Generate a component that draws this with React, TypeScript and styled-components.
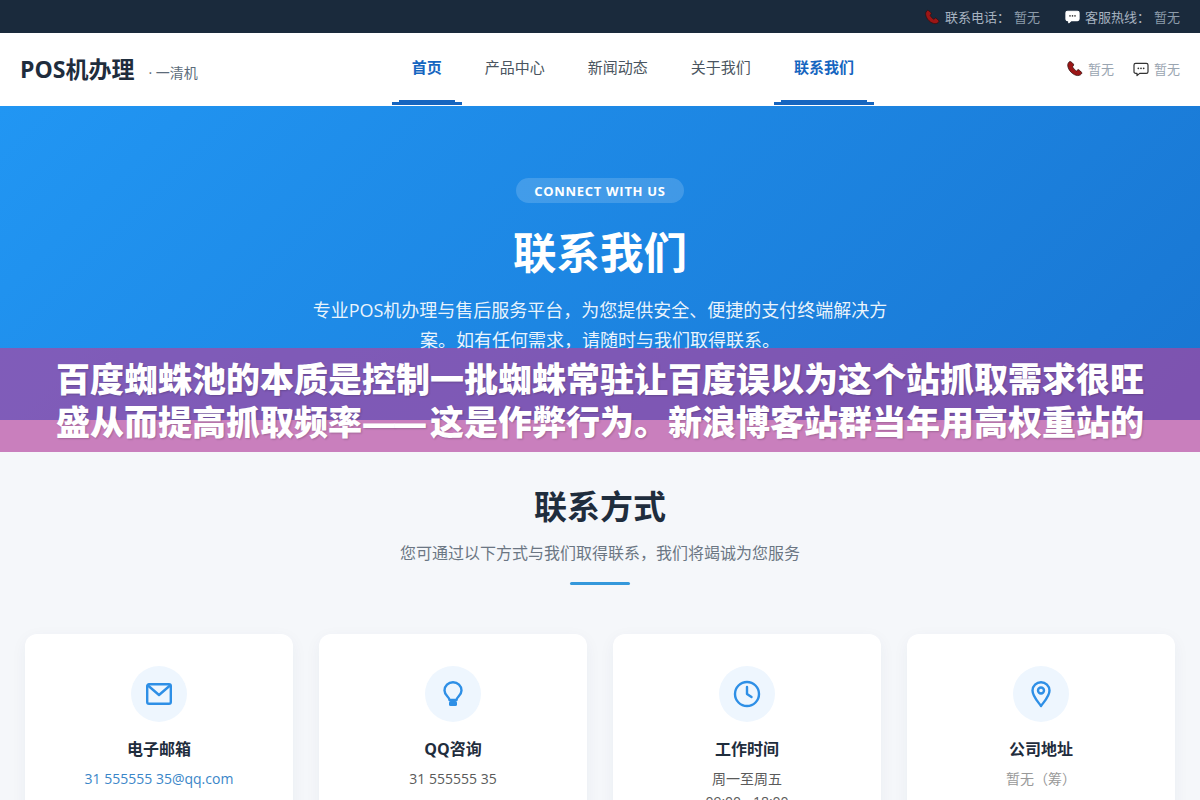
import React from 'react'
import styled, { createGlobalStyle } from 'styled-components'

const GlobalStyle = createGlobalStyle`
  html, body {
    margin: 0;
    padding: 0;
    height: 800px;
    overflow: hidden;
    background: #f5f7fa;
    font-family: "Open Sans", "Noto Sans CJK SC", sans-serif;
  }
  * { box-sizing: border-box; }
`

const Page = styled.div`
  position: relative;
  width: 1200px;
  height: 800px;
  overflow: hidden;
`

const TopBar = styled.div`
  height: 33px;
  background: #1a2a3c;
  display: flex;
  justify-content: flex-end;
  align-items: center;
  gap: 25px;
  padding: 0 20px;
  font-size: 13px;
  color: #a7b3c0;
`

const TopItem = styled.div`
  display: flex;
  align-items: center;
  gap: 5px;
`

const TopLabel = styled.span`
  display: flex;
  gap: 4px;
`

const Muted = styled.span`
  color: #8d9cab;
`

const Header = styled.header`
  height: 73px;
  background: #fff;
  display: flex;
  justify-content: space-between;
  align-items: center;
  padding: 0 20px;
`

const Logo = styled.div`
  display: flex;
  align-items: baseline;
  gap: 14px;
  margin-bottom: 4px;
`

const LogoName = styled.span`
  font-size: 23px;
  font-weight: 700;
  color: #1f2d3d;
`

const LogoTag = styled.span`
  font-size: 14px;
  color: #5c6b7a;
`

const Nav = styled.nav`
  display: flex;
  gap: 3px;
  height: 100%;
  margin-left: 2px;
`

const NavItem = styled.a<{ $active?: boolean }>`
  position: relative;
  padding: 0 20px 7px;
  display: flex;
  align-items: center;
  font-size: 15px;
  font-weight: ${(p) => (p.$active ? 700 : 400)};
  color: ${(p) => (p.$active ? '#1565c0' : '#4a5560')};

  &::before {
    content: ${(p) => (p.$active ? "''" : 'none')};
    position: absolute;
    left: 7px;
    right: 7px;
    bottom: 4px;
    height: 2px;
    background: #1565c0;
  }

  &::after {
    content: ${(p) => (p.$active ? "''" : 'none')};
    position: absolute;
    left: 0;
    right: 0;
    bottom: 1px;
    height: 3px;
    background: #1565c0;
  }
`

const HeaderContacts = styled.div`
  display: flex;
  gap: 19px;
  margin-bottom: 2px;
  font-size: 13px;
  color: #9aa5b1;
`

const HeaderContact = styled.div`
  display: flex;
  align-items: center;
  gap: 5px;
`

const Hero = styled.section`
  height: 314px;
  background: linear-gradient(135deg, #2196f3 0%, #1976d2 100%);
  display: flex;
  flex-direction: column;
  align-items: center;
  padding-top: 72px;
  color: #fff;
`

const Pill = styled.div`
  height: 25px;
  width: 168px;
  border-radius: 13px;
  background: rgba(255, 255, 255, 0.16);
  font-size: 13px;
  font-weight: 700;
  letter-spacing: 0.7px;
  display: flex;
  align-items: center;
  justify-content: center;
`

const HeroTitle = styled.h1`
  margin: 20px 0 0;
  font-size: 43.500px;
  line-height: 60px;
  font-weight: 700;
`

const HeroText = styled.p`
  margin: 12px 0 0;
  width: 600px;
  font-size: 18px;
  line-height: 30px;
  text-align: center;
  color: rgba(255, 255, 255, 0.92);
`

const Section = styled.section`
  padding: 60px 25px 0;
  display: flex;
  flex-direction: column;
  align-items: center;
`

const SectionTitle = styled.h2`
  margin: 0;
  font-size: 33px;
  line-height: 54px;
  font-weight: 700;
  color: #1f2d3d;
`

const SectionText = styled.p`
  margin: 6px 0 0;
  font-size: 16px;
  line-height: 26px;
  color: #6b7683;
`

const Rule = styled.div`
  margin-top: 16px;
  width: 60px;
  height: 3px;
  border-radius: 2px;
  background: #3498db;
`

const CardGrid = styled.div`
  margin-top: 49px;
  width: 100%;
  display: grid;
  grid-template-columns: repeat(4, 1fr);
  gap: 26px;
`

const Card = styled.article`
  height: 260px;
  padding-top: 32px;
  background: #fff;
  border-radius: 12px;
  box-shadow: 0 4px 16px rgba(40, 60, 90, 0.05);
  display: flex;
  flex-direction: column;
  align-items: center;
`

const IconCircle = styled.div`
  width: 56px;
  height: 56px;
  border-radius: 50%;
  background: #eef6fe;
  display: flex;
  align-items: center;
  justify-content: center;
`

const CardTitle = styled.h3`
  margin: 16px 0 0;
  font-size: 16px;
  line-height: 22px;
  font-weight: 700;
  color: #1f2d3d;
`

const CardLine = styled.div<{ $tone?: 'link' | 'muted' }>`
  margin-top: 8px;
  font-size: 14px;
  line-height: 22px;
  color: ${(p) => (p.$tone === 'link' ? '#3a86c8' : p.$tone === 'muted' ? '#999' : '#5a5a5a')};

  & + & {
    margin-top: 1px;
  }
`

const Banner = styled.div`
  position: absolute;
  left: 0;
  right: 0;
  top: 348px;
  height: 104px;
  padding-top: 10px;
  background: rgba(177, 65, 158, 0.66);
  color: #fff;
  text-align: center;
  font-size: 34px;
  line-height: 43px;
  font-weight: 900;
  white-space: nowrap;
  text-shadow: 1px 1px 2px rgba(0, 0, 0, 0.2);
`

const Dash = styled.span`
  letter-spacing: -3px;
  margin-right: 6px;
`

const PhoneIcon: React.FC<{ size: number }> = ({ size }) => (
  <svg width={size} height={size} viewBox="0 0 24 24">
    <path
      d="M5.500 2C3.500 3 2 5.500 2.500 8.500C3.500 15 10 21.500 16.500 22C19.500 22 21.500 20.500 22.500 18.500C22.500 17.500 18.500 13.500 17 13.500L14.800 15.500C12.500 14.300 10 11.500 9.300 9.500L11 7C11 5.500 7 2 5.500 2Z"
      fill="#9c1616"
      stroke="#2a0c0c"
      strokeWidth="1"
      strokeLinejoin="round"
    />
  </svg>
)

const BubbleIcon: React.FC<{ size: number; outline?: boolean }> = ({ size, outline }) => (
  <svg width={size} height={size} viewBox="0 0 24 24">
    <path
      d="M4 3.500H20C21.500 3.500 22.500 4.500 22.500 6V16C22.500 17.500 21.500 18.500 20 18.500H10L6 22V18.500H4C2.500 18.500 1.500 17.500 1.500 16V6C1.500 4.500 2.500 3.500 4 3.500Z"
      fill="#fff"
      stroke={outline ? '#333' : '#fff'}
      strokeWidth="1.800"
      strokeLinejoin="round"
    />
    <circle cx="8" cy="11" r="1.300" fill="#333" />
    <circle cx="12" cy="11" r="1.300" fill="#333" />
    <circle cx="16" cy="11" r="1.300" fill="#333" />
  </svg>
)

const CardSvg: React.FC<{ children: React.ReactNode }> = ({ children }) => (
  <svg width="28" height="28" viewBox="0 0 28 28" fill="none" stroke="#2e8fe6" strokeWidth="2.400" strokeLinecap="round" strokeLinejoin="round">
    {children}
  </svg>
)

const cards = [
  {
    title: '电子邮箱',
    lines: [{ text: '31 555555 35@qq.com', tone: 'link' as const }],
    icon: (
      <>
        <rect x="2.200" y="4.200" width="23.600" height="19.600" rx="1.800" />
        <path d="M3 5.500L14 15L25 5.500" />
      </>
    ),
  },
  {
    title: 'QQ咨询',
    lines: [{ text: '31 555555 35' }],
    icon: (
      <>
        <path d="M10.500 20C10.500 17 5.500 15.500 5.500 10.500C5.500 5.800 9.300 2.200 14 2.200C18.700 2.200 22.500 5.800 22.500 10.500C22.500 15.500 17.500 17 17.500 20Z" />
        <rect x="10" y="21" width="8" height="5" rx="1.500" fill="#2e8fe6" stroke="none" />
      </>
    ),
  },
  {
    title: '工作时间',
    lines: [{ text: '周一至周五' }, { text: '09:00 - 18:00' }],
    icon: (
      <>
        <circle cx="14" cy="14" r="12" />
        <path d="M14 7V14L18.500 17" />
      </>
    ),
  },
  {
    title: '公司地址',
    lines: [{ text: '暂无（筹）', tone: 'muted' as const }],
    icon: (
      <>
        <path d="M14 26C10 20.500 5.500 16 5.500 10.500C5.500 5.800 9.500 2.200 14 2.200C18.500 2.200 22.500 5.800 22.500 10.500C22.500 16 18 20.500 14 26Z" />
        <circle cx="14" cy="10.500" r="3" />
      </>
    ),
  },
]

const navLinks = [
  { title: '首页', active: true },
  { title: '产品中心' },
  { title: '新闻动态' },
  { title: '关于我们' },
  { title: '联系我们', active: true },
]

const App: React.FC = () => (
  <Page>
    <GlobalStyle />
    <TopBar>
      <TopItem>
        <PhoneIcon size={16} />
        <TopLabel>
          联系电话：<Muted>暂无</Muted>
        </TopLabel>
      </TopItem>
      <TopItem>
        <BubbleIcon size={15} />
        <TopLabel>
          客服热线：<Muted>暂无</Muted>
        </TopLabel>
      </TopItem>
    </TopBar>
    <Header>
      <Logo>
        <LogoName>POS机办理</LogoName>
        <LogoTag>· 一清机</LogoTag>
      </Logo>
      <Nav>
        {navLinks.map((link) => (
          <NavItem key={link.title} $active={link.active}>
            {link.title}
          </NavItem>
        ))}
      </Nav>
      <HeaderContacts>
        <HeaderContact>
          <PhoneIcon size={17} />
          暂无
        </HeaderContact>
        <HeaderContact>
          <BubbleIcon size={16} outline />
          暂无
        </HeaderContact>
      </HeaderContacts>
    </Header>
    <Hero>
      <Pill>CONNECT WITH US</Pill>
      <HeroTitle>联系我们</HeroTitle>
      <HeroText>专业POS机办理与售后服务平台，为您提供安全、便捷的支付终端解决方案。如有任何需求，请随时与我们取得联系。</HeroText>
    </Hero>
    <Section>
      <SectionTitle>联系方式</SectionTitle>
      <SectionText>您可通过以下方式与我们取得联系，我们将竭诚为您服务</SectionText>
      <Rule />
      <CardGrid>
        {cards.map((card) => (
          <Card key={card.title}>
            <IconCircle>
              <CardSvg>{card.icon}</CardSvg>
            </IconCircle>
            <CardTitle>{card.title}</CardTitle>
            {card.lines.map((line) => (
              <CardLine key={line.text} $tone={line.tone}>
                {line.text}
              </CardLine>
            ))}
          </Card>
        ))}
      </CardGrid>
    </Section>
    <Banner>
      百度蜘蛛池的本质是控制一批蜘蛛常驻让百度误以为这个站抓取需求很旺
      <br />
      盛从而提高抓取频率<Dash>——</Dash>这是作弊行为。新浪博客站群当年用高权重站的
    </Banner>
  </Page>
)

export default App
